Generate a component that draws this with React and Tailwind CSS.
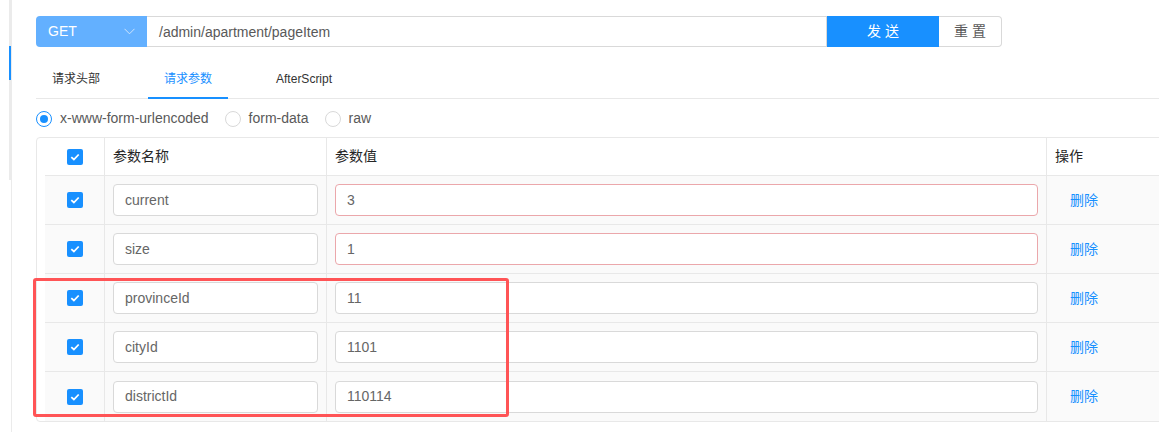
import React, { useState } from "react";

const rows = [
  { key: "current", value: "3", warn: true },
  { key: "size", value: "1", warn: true },
  { key: "provinceId", value: "11" },
  { key: "cityId", value: "1101" },
  { key: "districtId", value: "110114" },
];

const Check = () => (
  <span className="flex h-[16px] w-[16px] items-center justify-center rounded-[2px] bg-[#1890ff]">
    <svg width="10" height="8" viewBox="0 0 10 8" fill="none">
      <path d="M1.3 4.1 L3.9 6.5 L8.7 1.5" stroke="#fff" strokeWidth="1.8" />
    </svg>
  </span>
);

const Radio = ({ checked, label }) => (
  <label className="mr-[8px] flex items-center">
    <span
      className={`flex h-[16px] w-[16px] items-center justify-center rounded-full border ${
        checked ? "border-[#1890ff]" : "border-[#d9d9d9]"
      } bg-white`}
    >
      {checked && <span className="h-[8px] w-[8px] rounded-full bg-[#1890ff]" />}
    </span>
    <span className="px-[8px] text-[14px] text-[#595959]">{label}</span>
  </label>
);

const App = () => {
  const [tab] = useState("params");

  return (
    <div className="relative flex h-[432px] w-[1159px] overflow-hidden bg-white font-['Liberation_Sans','Noto_Sans_CJK_SC',sans-serif]">
      {/* left rail */}
      <div className="flex w-[12px] shrink-0 pl-[9px]">
        <div className="flex w-[3px] flex-col">
          <div className="h-[180px] bg-[#ebebeb] pt-[46px]">
            <div className="h-[34px] w-[2px] bg-[#1890ff]" />
          </div>
          <div className="ml-[2px] w-[1px] flex-1 bg-[#ebebeb]" />
        </div>
      </div>

      <div className="min-w-0 flex-1 pl-[24px] pt-[16px]">
        {/* request bar */}
        <div className="flex h-[31px] text-[14px]">
          <div className="flex w-[111px] items-center justify-between rounded-l-[4px] bg-[#63b0ff] pl-[12px] pr-[12px] text-white">
            <span>GET</span>
            <svg width="11" height="7" viewBox="0 0 11 7" fill="none">
              <path d="M0.5 0.8 L5.5 5.8 L10.5 0.8" stroke="#cfe4fb" strokeWidth="1" />
            </svg>
          </div>
          <div className="flex w-[680px] items-center border border-l-0 border-[#d9d9d9] px-[12px] pt-[1px] text-[#595959]">
            /admin/apartment/pageItem
          </div>
          <button className="w-[112px] bg-[#1890ff] text-white">发 送</button>
          <button className="w-[63px] rounded-r-[4px] border border-l-0 border-[#d9d9d9] text-[#595959]">
            重 置
          </button>
        </div>

        {/* tabs */}
        <div className="mt-[12px] flex h-[40px] border-b border-[#e8e8e8] text-[12px]">
          {[
            { id: "headers", label: "请求头部" },
            { id: "params", label: "请求参数" },
            { id: "after", label: "AfterScript" },
          ].map((t) => (
            <div
              key={t.id}
              className={`mr-[32px] -mb-px flex items-center border-b-2 px-[16px] pt-[2px] ${
                tab === t.id
                  ? "border-[#1890ff] text-[#1890ff]"
                  : "border-transparent text-[#333]"
              }`}
            >
              {t.label}
            </div>
          ))}
        </div>

        {/* body type */}
        <div className="flex h-[38px] items-center pt-[1px]">
          <Radio checked label="x-www-form-urlencoded" />
          <Radio label="form-data" />
          <Radio label="raw" />
        </div>

        {/* params table */}
        <div className="w-[1140px] rounded-[4px] border border-[#e8e8e8] pl-[8px] text-[14px]">
          <div className="flex h-[38px] border-b border-[#e8e8e8] text-[#262626]">
            <div className="flex w-[60px] items-center justify-center border-r border-[#e8e8e8] pl-[1px]">
              <Check />
            </div>
            <div className="flex w-[222px] items-center border-r border-[#e8e8e8] px-[8px]">参数名称</div>
            <div className="flex w-[720px] items-center border-r border-[#e8e8e8] px-[8px]">参数值</div>
            <div className="flex flex-1 items-center px-[8px]">操作</div>
          </div>
          {rows.map((r, i) => (
            <div
              key={r.key}
              className={`flex h-[49px] bg-[#fafafa] ${
                i < rows.length - 1 ? "border-b border-[#e8e8e8]" : "h-[48px]"
              }`}
            >
              <div className="flex w-[60px] items-center justify-center border-r border-[#e8e8e8] pl-[1px]">
                <Check />
              </div>
              <div className="flex w-[222px] items-center border-r border-[#e8e8e8] px-[8px]">
                <div className="flex h-[32px] w-full items-center rounded-[4px] border border-[#d9d9d9] bg-white px-[11px] text-[#666]">
                  {r.key}
                </div>
              </div>
              <div className="flex w-[720px] items-center border-r border-[#e8e8e8] px-[8px]">
                <div
                  className={`flex h-[32px] w-full items-center rounded-[4px] border bg-white px-[11px] text-[#666] ${
                    r.warn ? "border-[#eba7ab]" : "border-[#d9d9d9]"
                  }`}
                >
                  {r.value}
                </div>
              </div>
              <div className="flex flex-1 items-center pl-[23px] text-[#1890ff]">删除</div>
            </div>
          ))}
        </div>
      </div>

      {/* annotation box */}
      <div className="pointer-events-none absolute left-[33px] top-[278px] h-[139px] w-[476px] rounded-[3px] border-[3px] border-[#ff5456]" />
    </div>
  );
};

export default App;
